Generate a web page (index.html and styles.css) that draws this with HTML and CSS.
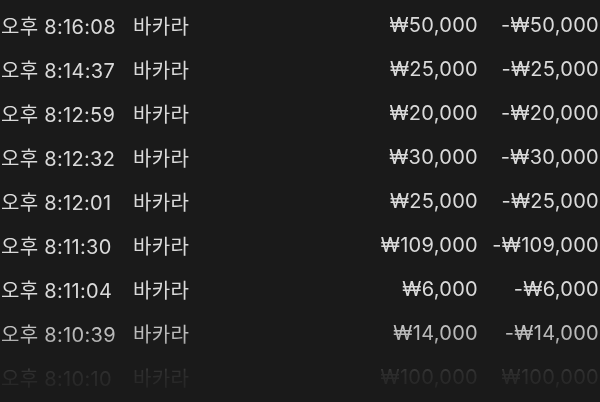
FILE: index.html
```html
<!DOCTYPE html>
<html lang="ko">
<head>
<meta charset="utf-8">
<link rel="stylesheet" href="styles.css">
</head>
<body>
<div class="list">
  <div class="row"><span class="time">오후 8:16:08</span><span class="game">바카라</span><span class="amt">₩50,000</span><span class="net">-₩50,000</span></div>
  <div class="row"><span class="time">오후 8:14:37</span><span class="game">바카라</span><span class="amt">₩25,000</span><span class="net">-₩25,000</span></div>
  <div class="row"><span class="time">오후 8:12:59</span><span class="game">바카라</span><span class="amt">₩20,000</span><span class="net">-₩20,000</span></div>
  <div class="row"><span class="time">오후 8:12:32</span><span class="game">바카라</span><span class="amt">₩30,000</span><span class="net">-₩30,000</span></div>
  <div class="row"><span class="time">오후 8:12:01</span><span class="game">바카라</span><span class="amt">₩25,000</span><span class="net">-₩25,000</span></div>
  <div class="row"><span class="time">오후 8:11:30</span><span class="game">바카라</span><span class="amt">₩109,000</span><span class="net">-₩109,000</span></div>
  <div class="row"><span class="time">오후 8:11:04</span><span class="game">바카라</span><span class="amt">₩6,000</span><span class="net">-₩6,000</span></div>
  <div class="row"><span class="time">오후 8:10:39</span><span class="game">바카라</span><span class="amt">₩14,000</span><span class="net">-₩14,000</span></div>
  <div class="row"><span class="time">오후 8:10:10</span><span class="game">바카라</span><span class="amt">₩100,000</span><span class="net">₩100,000</span></div>
</div>
</body>
</html>
```
FILE: styles.css
```css
html, body {
  margin: 0;
  padding: 0;
  background: #1a1a1a;
  width: 600px;
  height: 402px;
  overflow: hidden;
}
.list {
  display: flex;
  flex-direction: column;
  padding: 3px 2px 0 1px;
  color: #dadada;
  font-family: Inter, "Noto Sans CJK KR", sans-serif;
  font-size: 20px;
  letter-spacing: 0.3px;
  -webkit-mask-image: linear-gradient(to bottom, #000 0, #000 300px, rgba(0,0,0,0.8) 340px, rgba(0,0,0,0.1) 372px, rgba(0,0,0,0.03) 402px);
  mask-image: linear-gradient(to bottom, #000 0, #000 300px, rgba(0,0,0,0.8) 340px, rgba(0,0,0,0.1) 372px, rgba(0,0,0,0.03) 402px);
}
.row {
  display: grid;
  grid-template-columns: 132px 1fr 150px 120px;
  align-items: center;
  height: 44px;
  white-space: nowrap;
}
.amt, .net {
  text-align: right;
}
.net {
  margin-right: -1px;
}
```
